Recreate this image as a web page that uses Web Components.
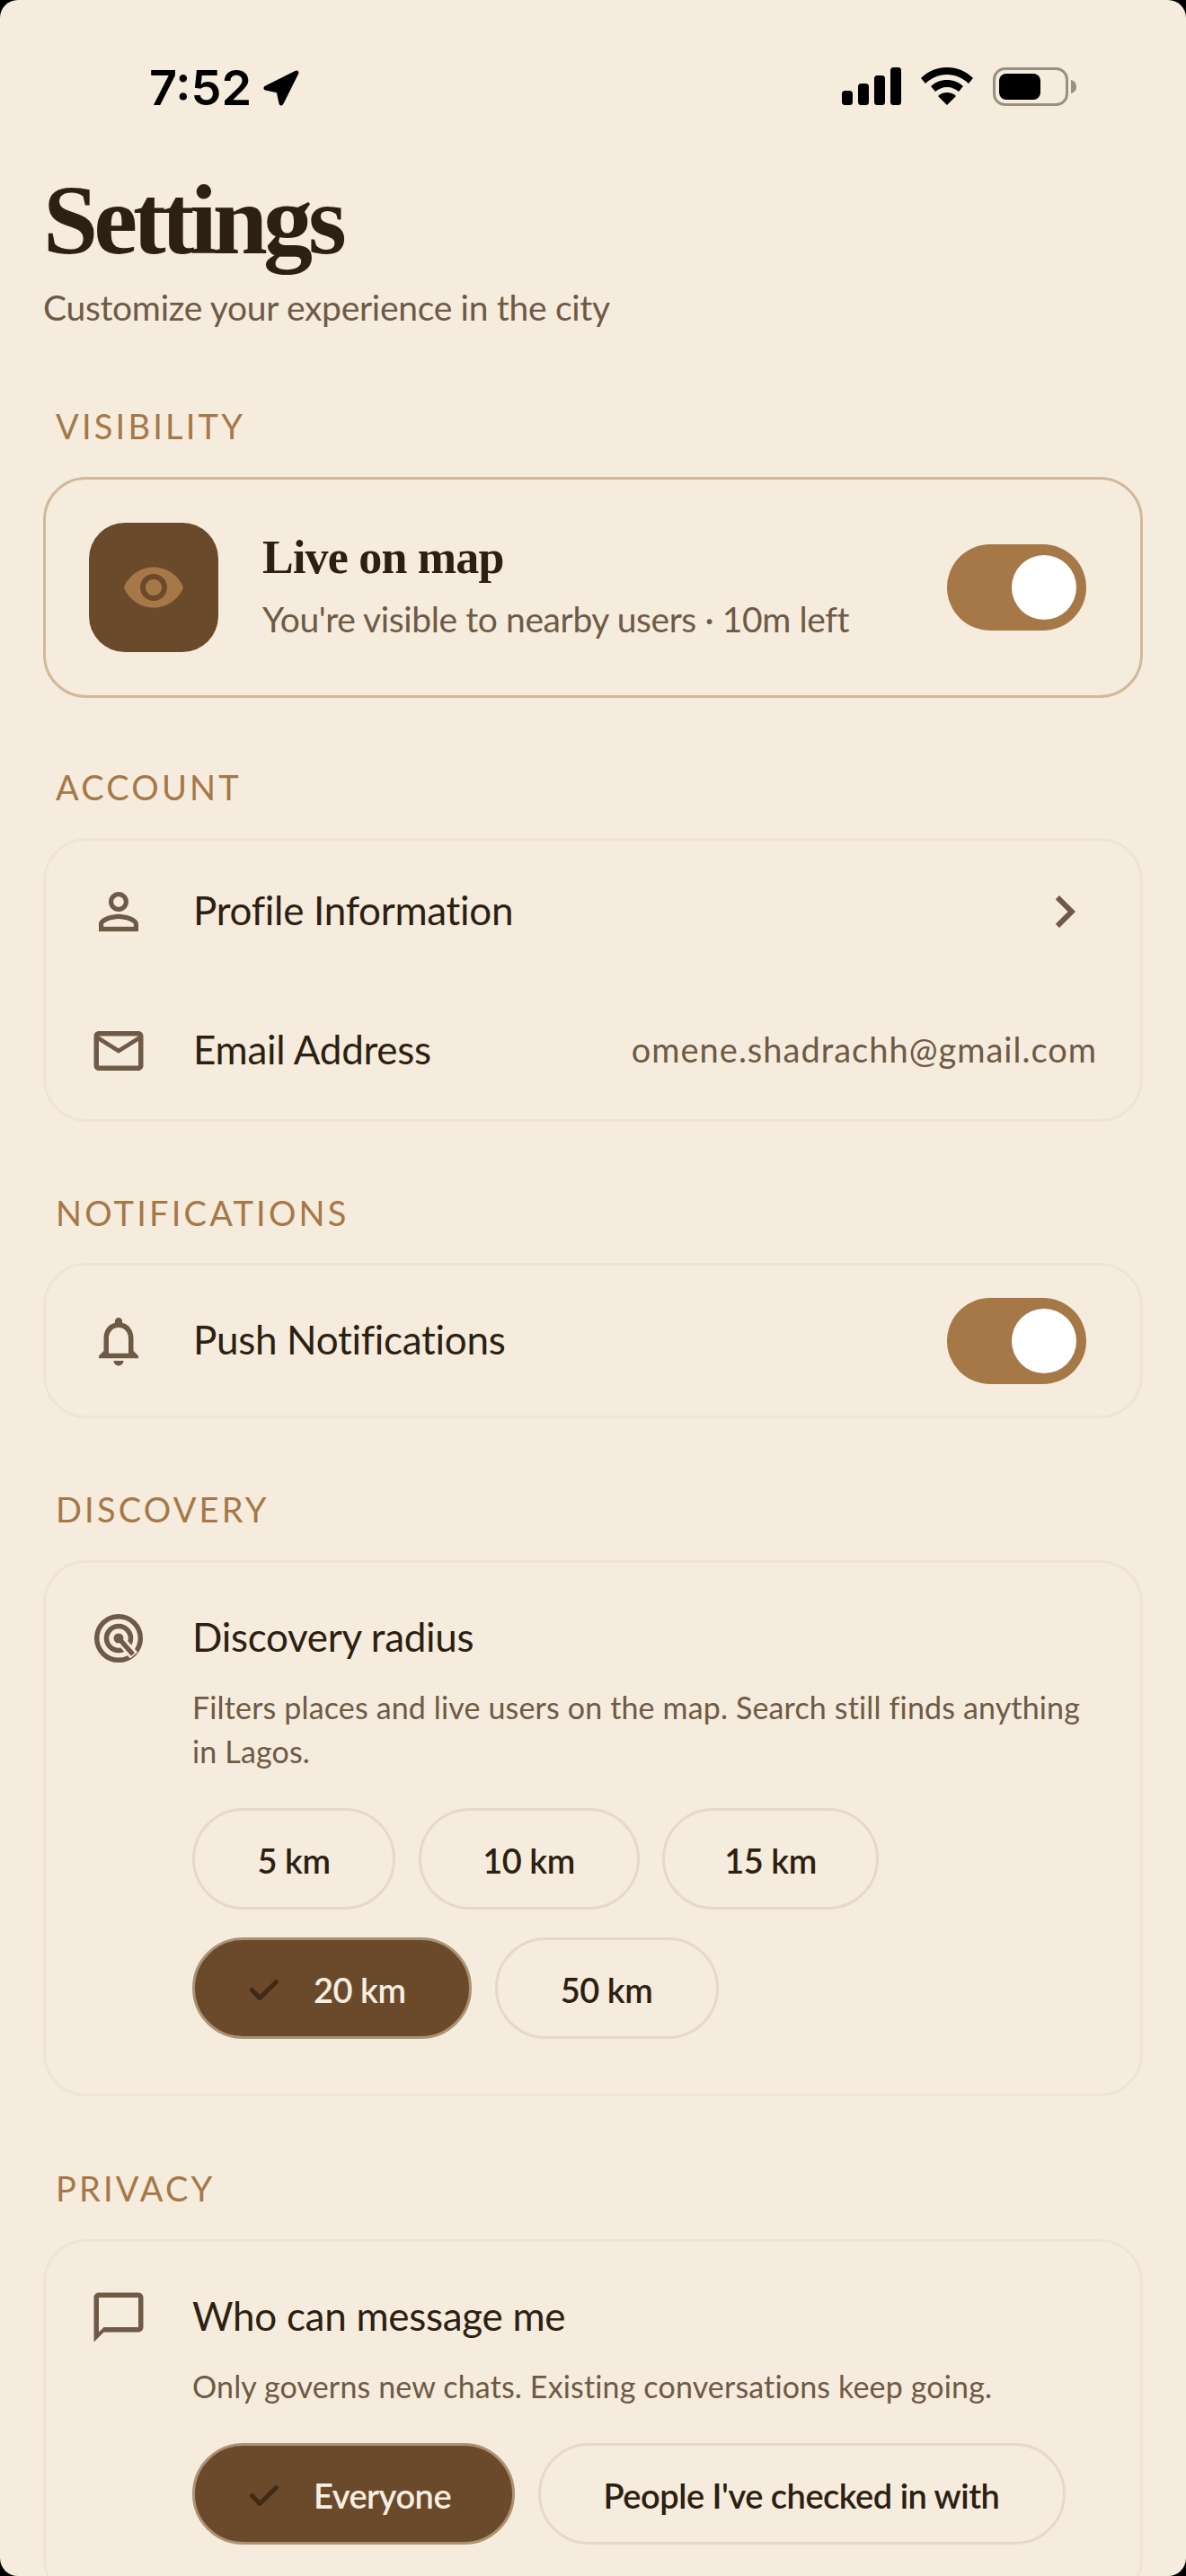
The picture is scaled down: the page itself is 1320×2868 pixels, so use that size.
<!DOCTYPE html>
<html>
<head>
<meta charset="utf-8">
<style>
    html, body { margin: 0; height: 2868px; overflow: hidden; background: #000; }
</style>
</head>
<body>

<settings-screen>
    <status-bar></status-bar>

    <page-title title="Settings" sub="Customize your experience in the city"></page-title>

    <section-label style="margin-top:85px">VISIBILITY</section-label>
    <settings-card live>
        <live-row></live-row>
    </settings-card>

    <section-label style="margin-top:77px">ACCOUNT</section-label>
    <settings-card>
        <setting-row icon="person" style="height:157px">
            Profile Information
            <svg slot="end" width="72" height="72" viewBox="0 0 24 24"><path d="M10 6L8.590 7.410 13.170 12l-4.580 4.590L10 18l6-6z" fill="#6e5a46"/></svg>
        </setting-row>
        <setting-row icon="mail" style="height:153px">
            Email Address
            <span slot="end" class="value">omene.shadrachh@gmail.com</span>
        </setting-row>
    </settings-card>

    <section-label style="margin-top:79px">NOTIFICATIONS</section-label>
    <settings-card style="margin-top:-1px">
        <setting-row icon="bell" style="height:167px">
            Push Notifications
            <toggle-switch slot="end" style="margin-right:12px"></toggle-switch>
        </setting-row>
    </settings-card>

    <section-label style="margin-top:79px">DISCOVERY</section-label>
    <settings-card>
        <option-block icon="radius" title="Discovery radius">
            <span slot="desc">Filters places and live users on the map. Search still finds anything in Lagos.</span>
            <choice-chip w="226">5 km</choice-chip>
            <choice-chip w="246">10 km</choice-chip>
            <choice-chip w="241">15 km</choice-chip>
            <choice-chip w="311" selected>20 km</choice-chip>
            <choice-chip w="249">50 km</choice-chip>
        </option-block>
    </settings-card>

    <section-label style="margin-top:80px">PRIVACY</section-label>
    <settings-card>
        <option-block icon="chat" title="Who can message me">
            <span slot="desc">Only governs new chats. Existing conversations keep going.</span>
            <choice-chip w="359" selected>Everyone</choice-chip>
            <choice-chip w="587">People I've checked in with</choice-chip>
        </option-block>
    </settings-card>
</settings-screen>

<script>
const SANS = `Lato, "Open Sans", sans-serif`;
const SERIF = `"Liberation Serif", "DejaVu Serif", serif`;

function materialIcon(d) {
    return `<svg width="66" height="66" viewBox="0 0 24 24"><path fill="#6e5a46" d="${d}"/></svg>`;
}

const ICONS = {
    person: materialIcon("M12 5.900c1.160 0 2.100.940 2.100 2.100s-.940 2.100-2.100 2.100S9.900 9.160 9.900 8s.940-2.100 2.100-2.100m0 9c2.970 0 6.100 1.460 6.100 2.100v1.100H5.900V17c0-.640 3.130-2.100 6.100-2.100M12 4C9.790 4 8 5.790 8 8s1.790 4 4 4 4-1.790 4-4-1.790-4-4-4zm0 9c-2.670 0-8 1.340-8 4v3h16v-3c0-2.660-5.330-4-8-4z"),
    mail: materialIcon("M20 4H4c-1.100 0-1.990.900-1.990 2L2 18c0 1.100.900 2 2 2h16c1.100 0 2-.900 2-2V6c0-1.100-.900-2-2-2zm0 14H4V8l8 5 8-5v10zm-8-7L4 6h16l-8 5z"),
    bell: materialIcon("M12 22c1.100 0 2-.900 2-2h-4c0 1.100.900 2 2 2zm6-6v-5c0-3.070-1.630-5.640-4.500-6.320V4c0-.830-.670-1.500-1.500-1.500s-1.500.670-1.500 1.500v.680C7.640 5.360 6 7.920 6 11v5l-2 2v1h16v-1l-2-2zm-2 1H8v-6c0-2.480 1.510-4.500 4-4.500s4 2.020 4 4.500v6z"),
    radius: `<svg width="66" height="66" viewBox="0 0 66 66"><circle cx="33" cy="33" r="24.300" fill="none" stroke="#6e5a46" stroke-width="5.500"/><circle cx="33" cy="33" r="13.500" fill="none" stroke="#6e5a46" stroke-width="5.500"/><circle cx="33" cy="33" r="5.500" fill="#6e5a46"/><path d="M36 36l14 16" stroke="#f5ecdd" stroke-width="11"/><path d="M34 34l15 17" stroke="#6e5a46" stroke-width="5.500"/></svg>`,
    chat: materialIcon("M20 2H4c-1.100 0-2 .900-2 2v18l4-4h14c1.100 0 2-.900 2-2V4c0-1.100-.900-2-2-2zm0 14H6l-2 2V4h16v12z")
};

class SettingsScreen extends HTMLElement {
    constructor() {
        super();
        this.attachShadow({ mode: "open" });
        this.shadowRoot.innerHTML = `
<style>
    :host {
        display: block;
        height: 2868px;
        padding: 0 48px;
        box-sizing: border-box;
        overflow: hidden;
        border-radius: 20px;
        background: #f5ecdd;
        font-family: ${SANS};
    }
</style>
<slot></slot>`;
    }
}

class StatusBar extends HTMLElement {
    constructor() {
        super();
        this.attachShadow({ mode: "open" });
        this.shadowRoot.innerHTML = `
<style>
    :host {
        display: flex;
        align-items: center;
        justify-content: space-between;
        height: 60px;
        margin: 66px -48px 0 0;
        padding: 0 122px 0 118px;
        box-sizing: border-box;
    }
    .time { display: flex; align-items: center; gap: 12px; padding-top: 3px; font: 600 54px "Inter", sans-serif; color: #000; }
    .icons { display: flex; align-items: center; gap: 22px; }
</style>
<div class="time">7:52
    <svg width="42" height="42" viewBox="0 0 42 42"><path d="M4 21L38 4 21 38 18 24z" fill="#000" stroke="#000" stroke-width="5" stroke-linejoin="round"/></svg>
</div>
<div class="icons">
    <svg width="66" height="42" viewBox="0 0 66 42"><rect y="26" width="12" height="16" rx="3.500"/><rect x="18" y="18" width="12" height="24" rx="3.500"/><rect x="36" y="9" width="12" height="33" rx="3.500"/><rect x="54" y="0" width="12" height="42" rx="3.500"/></svg>
    <svg width="58" height="42" viewBox="0 0 58 42"><path d="M29 0C18 0 8 4 0 12l5 6c6-6 15-10 24-10s18 4 24 10l5-6C50 4 40 0 29 0z"/><path d="M29 14c-7 0-13 2.500-18 7l5 6c3.500-3 8-5 13-5s9.500 2 13 5l5-6c-5-4.500-11-7-18-7z"/><path d="M29 28c-4 0-7.500 1.500-10 4l10 10 10-10c-2.500-2.500-6-4-10-4z"/></svg>
    <svg width="93" height="43" viewBox="0 0 93 43"><rect x="1.500" y="1.500" width="81" height="40" rx="12" fill="none" stroke="#9a9082" stroke-width="3"/><rect x="7" y="7" width="46" height="29" rx="8"/><path d="M87 14c3 .5 6 3 6 7.500s-3 7-6 7.500z" fill="#9a9082"/></svg>
</div>`;
    }
}

class PageTitle extends HTMLElement {
    constructor() {
        super();
        this.attachShadow({ mode: "open" });
        this.shadowRoot.innerHTML = `
<style>
    :host { display: block; padding-top: 59px; }
    h1 { margin: 0; font: 700 110px/120px ${SERIF}; letter-spacing: -5px; color: #2d1f12; }
    p { margin: 12px 0 0; font: 400 39px/50px ${SANS}; letter-spacing: -.3px; color: #6e5a46; }
</style>
<h1></h1><p></p>`;
        this.shadowRoot.querySelector("h1").textContent = this.getAttribute("title");
        this.shadowRoot.querySelector("p").textContent = this.getAttribute("sub");
    }
}

class SectionLabel extends HTMLElement {
    constructor() {
        super();
        this.attachShadow({ mode: "open" });
        this.shadowRoot.innerHTML = `
<style>
    :host {
        display: block;
        padding: 0 0 0 14px;
        margin-bottom: 35px;
        font: 400 38px/44px ${SANS};
        letter-spacing: 3.200px;
        color: #a67848;
    }
</style>
<slot></slot>`;
    }
}

class SettingsCard extends HTMLElement {
    constructor() {
        super();
        this.attachShadow({ mode: "open" });
        this.shadowRoot.innerHTML = `
<style>
    :host {
        display: block;
        box-sizing: border-box;
        border: 3px solid #efe4d3;
        border-radius: 48px;
        overflow: hidden;
    }
    :host([live]) { border-color: #d2b898; }
</style>
<slot></slot>`;
    }
}

class LiveRow extends HTMLElement {
    constructor() {
        super();
        this.attachShadow({ mode: "open" });
        this.shadowRoot.innerHTML = `
<style>
    :host { display: flex; align-items: center; height: 240px; padding: 0 60px 0 48px; }
    .badge { width: 144px; height: 144px; border-radius: 40px; background: #6b4a2b; display: flex; align-items: center; justify-content: center; flex: none; }
    .text { flex: 1; margin-left: 49px; padding-bottom: 5px; }
    .name { font: 700 52px/64px ${SERIF}; letter-spacing: -.8px; color: #2d1f12; }
    .sub { font: 400 39px/50px ${SANS}; letter-spacing: -.4px; color: #6e5a46; margin-top: 11px; }
</style>
<div class="badge">
    <svg width="72" height="72" viewBox="0 0 24 24"><path fill="#a67848" d="M12 4.500C7 4.500 2.730 7.610 1 12c1.730 4.390 6 7.500 11 7.500s9.270-3.110 11-7.500c-1.730-4.390-6-7.500-11-7.500zM12 17c-2.760 0-5-2.240-5-5s2.240-5 5-5 5 2.240 5 5-2.240 5-5 5zm0-8c-1.660 0-3 1.340-3 3s1.340 3 3 3 3-1.340 3-3-1.340-3-3-3z"/></svg>
</div>
<div class="text">
    <div class="name">Live on map</div>
    <div class="sub">You're visible to nearby users · 10m left</div>
</div>
<toggle-switch></toggle-switch>`;
    }
}

class ToggleSwitch extends HTMLElement {
    constructor() {
        super();
        this.attachShadow({ mode: "open" });
        this.shadowRoot.innerHTML = `
<style>
    :host { display: flex; justify-content: flex-end; align-items: center; width: 155px; height: 96px; padding-right: 11px; box-sizing: border-box; border-radius: 48px; background: #a67848; flex: none; }
    i { display: block; width: 72px; height: 72px; border-radius: 50%; background: #fff; }
</style>
<i></i>`;
    }
}

class SettingRow extends HTMLElement {
    constructor() {
        super();
        this.attachShadow({ mode: "open" });
        const icon = ICONS[this.getAttribute("icon")] || "";
        this.shadowRoot.innerHTML = `
<style>
    :host { display: flex; align-items: center; padding: 0 48px 0 48px; box-sizing: border-box; color: #2d1f12; font: 400 44px/56px ${SANS}; letter-spacing: -.3px; }
    .icon { width: 66px; height: 66px; margin-right: 50px; flex: none; }
    .icon svg { display: block; }
    .label { flex: 1; padding-bottom: 4px; }
    ::slotted(.value) { font-size: 38px; letter-spacing: 1px; color: #6e5a46; padding-bottom: 4px; }
</style>
<div class="icon">${icon}</div>
<div class="label"><slot></slot></div>
<slot name="end"></slot>`;
    }
}

class OptionBlock extends HTMLElement {
    constructor() {
        super();
        this.attachShadow({ mode: "open" });
        const icon = ICONS[this.getAttribute("icon")] || "";
        this.shadowRoot.innerHTML = `
<style>
    :host { display: grid; grid-template-columns: 66px 1fr; column-gap: 49px; padding: 51px 48px 61px 48px; }
    .icon svg { display: block; }
    .title { margin-top: -2px; font: 400 44px/66px ${SANS}; letter-spacing: -.3px; color: #2d1f12; }
    .desc { font: 400 34px/49px ${SANS}; letter-spacing: .15px; color: #6e5a46; margin-top: 21px; }
    .chips { display: flex; flex-wrap: wrap; gap: 31px 25.500px; margin-top: 39px; }
</style>
<div class="icon">${icon}</div>
<div>
    <div class="title"></div>
    <div class="desc"><slot name="desc"></slot></div>
    <div class="chips"><slot></slot></div>
</div>`;
        this.shadowRoot.querySelector(".title").textContent = this.getAttribute("title");
    }
}

class ChoiceChip extends HTMLElement {
    constructor() {
        super();
        this.attachShadow({ mode: "open" });
        const selected = this.hasAttribute("selected");
        this.shadowRoot.innerHTML = `
<style>
    :host {
        display: flex;
        align-items: center;
        justify-content: center;
        gap: 38px;
        box-sizing: border-box;
        height: 113px;
        padding-top: 2px;
        border: 3px solid #e6d9c6;
        border-radius: 57px;
        font: 600 38px/50px ${SANS};
        letter-spacing: -.5px;
        color: #2d1f12;
    }
    :host([selected]) { justify-content: flex-start; padding-left: 60px; background: #6b4a2b; border-color: #ab9274; color: #f7eee2; }
</style>
${selected ? `<svg width="34" height="24" viewBox="0 0 34 24"><path d="M2 11l10 10.500L32 2" fill="none" stroke="#3f2a16" stroke-width="5"/></svg>` : ""}
<slot></slot>`;
        this.style.width = this.getAttribute("w") + "px";
    }
}

customElements.define("settings-screen", SettingsScreen);
customElements.define("status-bar", StatusBar);
customElements.define("page-title", PageTitle);
customElements.define("section-label", SectionLabel);
customElements.define("settings-card", SettingsCard);
customElements.define("live-row", LiveRow);
customElements.define("toggle-switch", ToggleSwitch);
customElements.define("setting-row", SettingRow);
customElements.define("option-block", OptionBlock);
customElements.define("choice-chip", ChoiceChip);
</script>
</body>
</html>
